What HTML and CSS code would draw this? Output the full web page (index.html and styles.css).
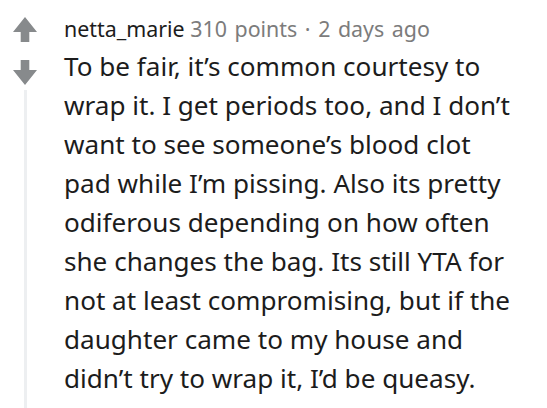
FILE: index.html
```html
<!DOCTYPE html>
<html>
<head>
<meta charset="utf-8">
<link rel="stylesheet" href="styles.css">
</head>
<body>
<div class="comment">
  <div class="rail">
    <svg class="vote" width="24" height="25" viewBox="0 0 24 25"><path d="M12 0 L24 15 L16.3 15 L16.3 25 L7.7 25 L7.7 15 L0 15 Z" fill="#878a8c"/></svg>
    <svg class="vote down" width="24" height="25" viewBox="0 0 24 25"><path d="M12 25 L24 10 L16.3 10 L16.3 0 L7.7 0 L7.7 10 L0 10 Z" fill="#878a8c"/></svg>
    <div class="thread"></div>
  </div>
  <div class="main">
    <div class="meta"><span class="user">netta_marie</span> <span class="info">310 points · 2 days ago</span></div>
    <p class="body">To be fair, it’s common courtesy to wrap it. I get periods too, and I don’t want to see someone’s blood clot pad while I’m pissing. Also its pretty odiferous depending on how often she changes the bag. Its still YTA for not at least compromising, but if the daughter came to my house and didn’t try to wrap it, I’d be queasy.</p>
  </div>
</div>
</body>
</html>
```

FILE: styles.css
```css
html, body {
  margin: 0;
  padding: 0;
  background: #ffffff;
}
.comment {
  display: flex;
  height: 408px;
  overflow: hidden;
  font-family: "Noto Sans", sans-serif;
}
.rail {
  width: 50px;
  flex: none;
  display: flex;
  flex-direction: column;
  align-items: center;
  padding-top: 17px;
}
.vote {
  display: block;
}
.vote.down {
  margin-top: 18px;
}
.thread {
  width: 3px;
  flex: 1;
  margin-top: 5px;
  background: #edeff1;
}
.main {
  padding-left: 14px;
  padding-top: 16px;
  width: 453px;
}
.meta {
  font-size: 21.4px;
  line-height: 26px;
}
.user {
  color: #1c1c1c;
}
.info {
  color: #7c7c7c;
  word-spacing: 2px;
}
.body {
  margin: 5px 0 0 0;
  font-size: 26.1px;
  line-height: 39px;
  color: #1c1c1c;
}
```
